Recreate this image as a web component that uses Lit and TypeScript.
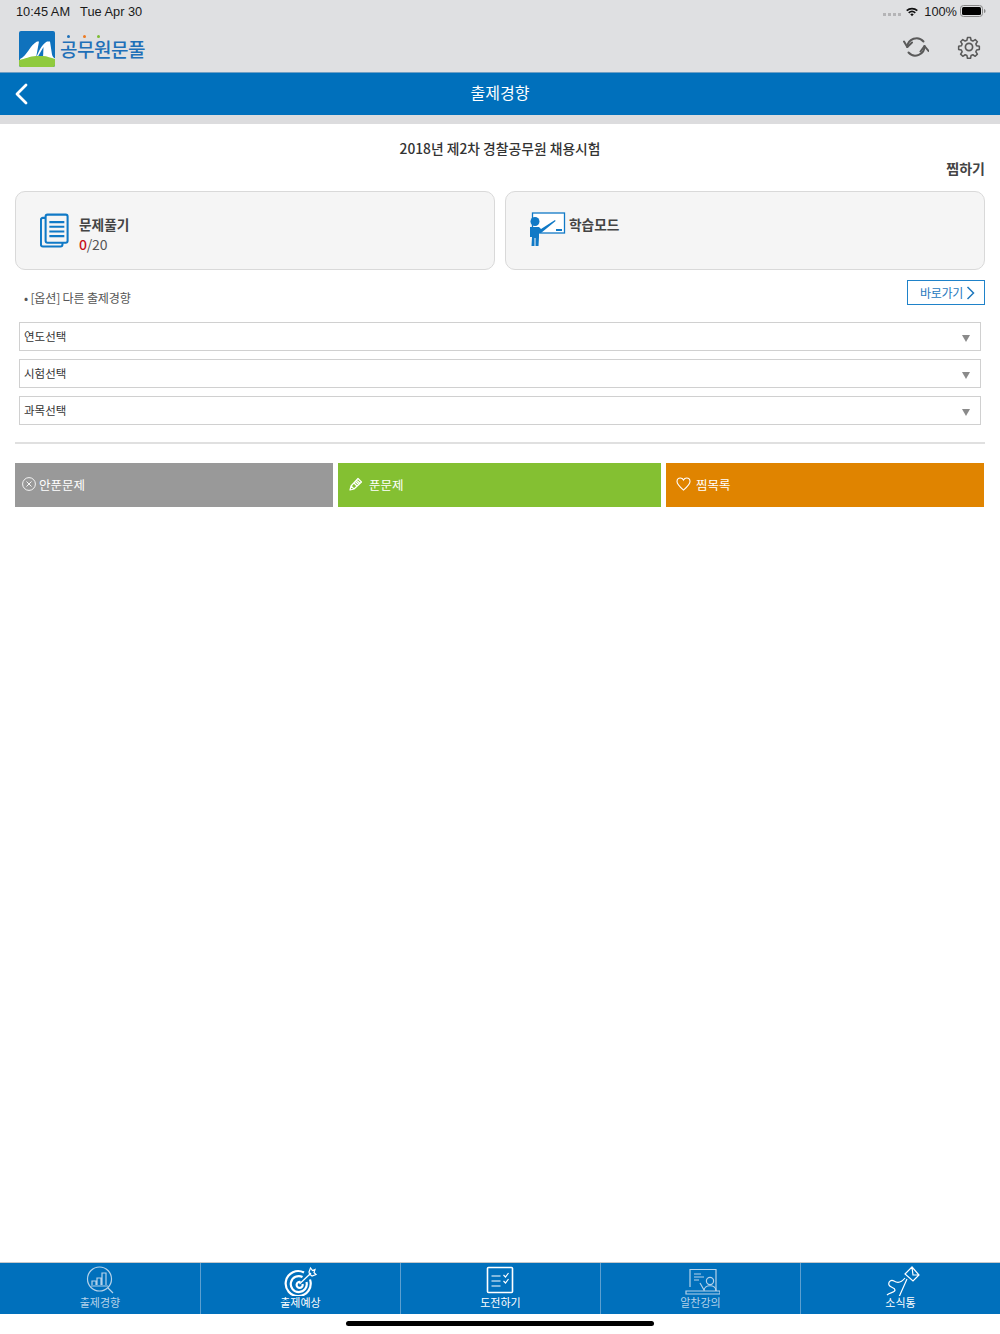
import { LitElement, html, css, svg } from "lit";
import { customElement } from "lit/decorators.js";

const tabs = [
  { label: "출제경향", dim: true, icon: svg`<circle cx="17.500" cy="13" r="12"/><path d="M26 22l5 5M10 19v-4h4v4M15 19v-7h4v7M20 19V7h4v12M9 20h17" /> ` },
  { label: "출제예상", dim: false, icon: svg`<path d="M21 6.500a12.500 12.500 0 1 0 6 7M19.500 11a8 8 0 1 0 4 5M17.500 16a3 3 0 1 0 2 2" stroke-width="2.200"/><path d="M16.500 18L28 7M26 6l1.500-4 2 2.500 2.500-1-1 3 2 2-4 1.500-2.500-2z"/>` },
  { label: "도전하기", dim: false, icon: svg`<rect x="4.500" y="1.500" width="25" height="25" rx="1" stroke-width="1.600"/><path d="M8.500 10h9M8.500 15h9M8.500 20h9M20.500 9l2 2 3-4M20.500 15l2 2 3-4"/>` },
  { label: "알찬강의", dim: true, icon: svg`<path d="M7 21V3.500h26v21.500M11 8h7M11 11h10M11 14h5M17 17l4 7"/><circle cx="27" cy="15" r="3.600"/><path d="M21 25c0-7 12-7 12 0M3 25h34v3H3z"/>` },
  { label: "소식통", dim: false, icon: svg`<path d="M22 8l7-7 7 8-6 6zM29 1l1 8 6 0M24 13L16 31M22 12c-4 5-8 5-11 3s-6 1-5 4 6 2 6 5-5 2-8 5"/>` },
];

@customElement("app-root")
export class AppRoot extends LitElement {
  static styles = css`
    :host { display: block; width: 1000px; height: 1334px; background: #fff; font-family: "Noto Sans CJK KR", "Liberation Sans", sans-serif; color: #333; }
    .page { display: flex; flex-direction: column; height: 1334px; overflow: hidden; }
    .top { background: #dfe0e2; height: 72px; box-sizing: border-box; display: flex; flex-direction: column; flex: none; }
    .status { height: 24px; display: flex; align-items: center; padding: 0 14px 2px 16px; box-sizing: border-box; font: 12.8px "Liberation Sans", sans-serif; color: #1a1a1a; }
    .status .date { margin-left: 10px; }
    .status .spacer { flex: 1; }
    .dots { display: flex; gap: 2px; margin-right: 4px; margin-top: 6px; }
    .dots i { width: 3px; height: 3px; background: #b4b4b6; display: block; }
    .pct { margin: 0 3px 0 5px; }
    .brandrow { flex: 1; display: flex; align-items: center; padding: 0 19px 0 19px; }
    .logo { width: 36px; height: 36px; display: block; margin-top: 1px; }
    .word { position: relative; margin-left: 5px; font-size: 19px; font-weight: 500; color: #1f70b8; letter-spacing: -0.5px; line-height: 30px; margin-top: 1px; }
    .word i { position: absolute; top: 1px; width: 3px; height: 3px; border-radius: 50%; display: block; }
    .d1 { left: 7px; background: #1f70b8; }
    .d2 { left: 23px; background: #ee7a22; }
    .d3 { left: 37px; background: #7dbb33; }
    .tools { margin-left: auto; display: flex; gap: 28px; align-items: center; margin-top: -2px; }
    .tools svg { display: block; }
    .nav { flex: none; height: 43px; background: #0070bc; border-top: 1px solid #6f9fc4; box-sizing: border-box; display: flex; align-items: center; justify-content: center; position: relative; color: #fff; font-size: 16px; padding-bottom: 4px; }
    .back { position: absolute; left: 14px; top: 10px; }
    .band { flex: none; height: 9px; background: #dcdcde; }
    .main { flex: 1; padding: 0 15px; min-height: 0; }
    .title { text-align: center; font-size: 13.800px; font-weight: 500; line-height: 20px; margin-top: 14px; color: #333; }
    .fav { text-align: right; font-size: 14px; font-weight: 700; line-height: 20px; color: #444; }
    .cards { display: grid; grid-template-columns: 1fr 1fr; gap: 10px; margin-top: 13px; }
    .card { height: 79px; box-sizing: border-box; border: 1px solid #d9d9d9; border-radius: 10px; background: #f5f5f5; display: flex; align-items: flex-start; }
    .card.a { padding: 21px 0 0 24px; gap: 10px; }
    .card.b { padding: 20px 0 0 23px; gap: 3px; }
    .ct { font-size: 13.700px; font-weight: 700; line-height: 20px; color: #444; }
    .a .ct { margin-top: 1px; }
    .b .ct { margin-top: 2px; }
    .cs { font-size: 14px; line-height: 20px; color: #555; letter-spacing: -0.2px; }
    .cs b { color: #c8101a; font-weight: 500; }
    .opt { display: flex; justify-content: space-between; height: 52px; box-sizing: border-box; padding: 10px 0 0 9px; }
    .opt span { font-size: 12.100px; line-height: 18px; color: #555; margin-top: 9px; letter-spacing: -0.2px; }
    .go { width: 78px; height: 25px; box-sizing: border-box; border: 1px solid #1f82c9; color: #1f78bd; font-size: 12px; letter-spacing: -0.3px; display: flex; align-items: center; justify-content: flex-end; padding-right: 9px; gap: 3px; background: #fff; }
    .selects { display: flex; flex-direction: column; gap: 8px; padding: 0 4px; }
    .sel { height: 29px; box-sizing: border-box; border: 1px solid #d0d0d0; background: #fff; display: flex; align-items: center; justify-content: space-between; padding: 0 10px 1px 4px; font-size: 11.500px; color: #333; }
    .caret { width: 0; height: 0; border-left: 4.500px solid transparent; border-right: 4.500px solid transparent; border-top: 7px solid #8a8a8a; margin-top: 4px; }
    .rule { height: 2px; background: #e0e0e0; margin-top: 17px; }
    .btns { display: flex; gap: 5px; margin-top: 19px; width: 969px; }
    .btn { height: 44px; display: flex; align-items: center; color: #fff; font-size: 12.500px; box-sizing: border-box; padding-bottom: 2px; }
    .btn svg { display: block; flex: none; }
    .gray { width: 318px; background: #999; padding-left: 7px; gap: 3px; }
    .green { width: 323px; background: #84c032; padding-left: 11px; gap: 6px; }
    .orange { width: 318px; background: #e08400; padding-left: 10px; gap: 5px; }
    .tabbar { flex: none; height: 52px; background: #0070bc; border-top: 1px solid #c6c9cc; box-sizing: border-box; display: grid; grid-template-columns: repeat(5, 1fr); }
    .tab { display: flex; flex-direction: column; align-items: center; border-left: 1px solid #5c9fd0; color: #fff; font-size: 11px; line-height: 13px; padding-top: 3px; box-sizing: border-box; }
    .tab:first-child { border-left: none; }
    .tab.dim { color: #b5d2ea; }
    .tab svg { display: block; height: 30px; fill: none; stroke: currentColor; stroke-width: 1.200; }
    .home { flex: none; height: 20px; display: flex; justify-content: center; padding-top: 7px; box-sizing: border-box; }
    .home i { display: block; width: 308px; height: 5px; border-radius: 3px; background: #000; }
  `;

  render() {
    return html`<div class="page">
      <div class="top">
        <div class="status">
          <span>10:45 AM</span><span class="date">Tue Apr 30</span><span class="spacer"></span>
          <span class="dots"><i></i><i></i><i></i><i></i></span>
          <svg width="14" height="11" viewBox="0 0 16 12"><path d="M8 11.500l2-2.400a3 3 0 0 0-4 0zM3.600 6.800l1.300 1.500a4.800 4.800 0 0 1 6.200 0l1.300-1.500a6.800 6.800 0 0 0-8.800 0zM1.300 4.200l1.300 1.500a8.200 8.200 0 0 1 10.800 0l1.300-1.500a10.200 10.200 0 0 0-13.400 0z" fill="#111"/></svg>
          <span class="pct">100%</span>
          <svg width="26" height="12" viewBox="0 0 26 12"><rect x=".5" y=".5" width="22" height="11" rx="3" fill="none" stroke="#888"/><rect x="2" y="2" width="19" height="8" rx="1.500" fill="#000"/><path d="M24 4v4c1 0 1.500-1 1.500-2S25 4 24 4z" fill="#888"/></svg>
        </div>
        <div class="brandrow">
          <svg class="logo" viewBox="0 0 36 36">
            <rect width="36" height="36" rx="2" fill="#0f72bd"/>
            <path d="M1 28C8 25 11 14 18 10.500h2L17 27C20 20 23 13 28 10.500h3l2 13c.4 2 1.500 3 3 4v3H1z" fill="#fff"/>
            <path d="M24.500 16L24 27h-6z" fill="#0f72bd"/>
            <path d="M0 29c6-1 11-4 17-4h7c4 0 8 2 12 3v6a2 2 0 0 1-2 2H2a2 2 0 0 1-2-2z" fill="#8fca3e"/>
          </svg>
          <span class="word">공무원문풀<i class="d1"></i><i class="d2"></i><i class="d3"></i></span>
          <div class="tools">
            <svg width="26" height="24" viewBox="0 0 26 24" fill="none" stroke="#5a5a5a" stroke-width="2" stroke-linecap="round" stroke-linejoin="round">
              <path d="M20.500 6.500A9.200 9.200 0 0 0 4.300 12M5.500 17.500A9.200 9.200 0 0 0 21.500 11"/>
              <path d="M1 6.500L4.300 12 9 7.500M17.500 16.500L21.500 11l4 5"/>
            </svg>
            <svg width="24" height="24" viewBox="0 0 24 24" fill="none" stroke="#5a5a5a" stroke-width="1.700" stroke-linejoin="round">
              <circle cx="12" cy="12" r="3.600"/>
              <path d="M10.300 1.500h3.400l.6 3 2 .9 2.600-1.700 2.400 2.400-1.700 2.600.9 2 3 .6v3.400l-3 .6-.9 2 1.700 2.600-2.400 2.400-2.600-1.700-2 .9-.6 3h-3.400l-.6-3-2-.9-2.600 1.700-2.400-2.400 1.700-2.600-.9-2-3-.6v-3.400l3-.6.9-2-1.700-2.600 2.400-2.400 2.600 1.700 2-.9z" transform="translate(1.200 1.200) scale(.9)"/>
            </svg>
          </div>
        </div>
      </div>
      <div class="nav">
        <svg class="back" width="16" height="22" viewBox="0 0 16 22" fill="none" stroke="#fff" stroke-width="2.800" stroke-linecap="round" stroke-linejoin="round"><path d="M12 2L3 11l9 9"/></svg>
        출제경향
      </div>
      <div class="band"></div>
      <div class="main">
        <div class="title">2018년 제2차 경찰공무원 채용시험</div>
        <div class="fav">찜하기</div>
        <div class="cards">
          <div class="card a">
            <svg width="29" height="36" viewBox="0 0 31 37" fill="none" stroke="#1079c6" stroke-width="2.200" stroke-linejoin="round">
              <path d="M6 4.500H3a2 2 0 0 0-2 2V33a2 2 0 0 0 2 2h19a2 2 0 0 0 2-2v-2"/>
              <rect x="6" y="1" width="23.500" height="30" rx="2" fill="#f5f5f5"/>
              <path d="M10 9h16M10 14h16M10 19h16M10 24h16"/>
            </svg>
            <div><div class="ct">문제풀기</div><div class="cs"><b>0</b>/20</div></div>
          </div>
          <div class="card b">
            <svg width="37" height="35" viewBox="0 0 37 35">
              <rect x="3.500" y="1" width="32" height="20" fill="#fff" stroke="#1079c6" stroke-width="1.300"/>
              <rect x="27" y="17" width="6" height="2" fill="#1079c6"/>
              <circle cx="6" cy="9.500" r="4.500" fill="#1079c6"/>
              <path d="M1 15h9l2 2 14-9 .6 1L12 21h-2v4l-.5 9H2.500L3 25H1z" fill="#1079c6"/>
              <rect x="5.500" y="26" width="1" height="8" fill="#f5f5f5"/>
            </svg>
            <div class="ct">학습모드</div>
          </div>
        </div>
        <div class="opt">
          <span>• [옵션] 다른 출제경향</span>
          <div class="go">바로가기<svg width="9" height="14" viewBox="0 0 9 14" fill="none" stroke="#1f78bd" stroke-width="1.500"><path d="M1.500 1l6 6-6 6"/></svg></div>
        </div>
        <div class="selects">
          ${["연도선택", "시험선택", "과목선택"].map((t) => html`<div class="sel"><span>${t}</span><i class="caret"></i></div>`)}
        </div>
        <div class="rule"></div>
        <div class="btns">
          <div class="btn gray">
            <svg width="14" height="14" viewBox="0 0 14 14" fill="none" stroke="#fff" stroke-width=".9"><circle cx="7" cy="7" r="6.400"/><path d="M4.500 4.500l5 5M9.500 4.500l-5 5"/></svg>안푼문제
          </div>
          <div class="btn green">
            <svg width="14" height="14" viewBox="0 0 14 14" fill="none" stroke="#fff" stroke-width="1.200" stroke-linejoin="round"><path d="M1 13l1-4 7-7.500 3.500 3.500L5 12zM2 9l3 3M7.500 3l3.500 3.500M5 6l3 3M6.500 4.500l3 3"/></svg>푼문제
          </div>
          <div class="btn orange">
            <svg width="15" height="14" viewBox="0 0 15 14" fill="none" stroke="#fff" stroke-width="1.100"><path d="M7.500 13C4 10 1 7.500 1 4.500 1 2.500 2.500 1 4.300 1c1.400 0 2.600.8 3.200 2 .6-1.200 1.800-2 3.200-2C12.500 1 14 2.500 14 4.500 14 7.500 11 10 7.500 13z"/></svg>찜목록
          </div>
        </div>
      </div>
      <div class="tabbar">
        ${tabs.map((t) => html`<div class="tab ${t.dim ? "dim" : ""}">
          <svg width="38" height="30" viewBox="0 0 36 30">${t.icon}</svg>
          <span>${t.label}</span>
        </div>`)}
      </div>
      <div class="home"><i></i></div>
    </div>`;
  }
}
